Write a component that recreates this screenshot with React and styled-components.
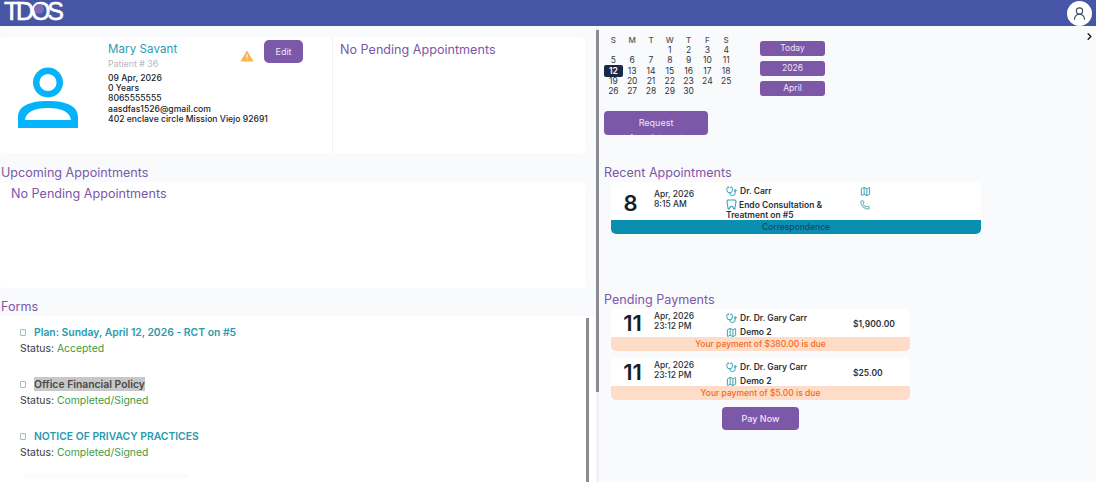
import React from 'react';
import styled, { createGlobalStyle } from 'styled-components';
import { ChevronRight, UserRound, Stethoscope, Map as MapIcon, Phone } from 'lucide-react';

const GlobalStyle = createGlobalStyle`
  html, body {
    margin: 0;
    padding: 0;
    height: 482px;
    overflow: hidden;
    background: #f9fafc;
    font-family: 'Inter', 'Liberation Sans', sans-serif;
  }
  * { box-sizing: border-box; }
`;

const purple = '#7d57a8';
const teal = '#2a9bb0';

const Page = styled.div`
  width: 1096px;
  height: 482px;
  display: flex;
  flex-direction: column;
  overflow: hidden;
`;
const Header = styled.header`
  height: 26px;
  flex: none;
  background: #4655a5;
  display: flex;
  align-items: center;
  justify-content: space-between;
  padding: 0 4px;
`;
const Logo = styled.div`
  position: relative;
  color: #fff;
  font-size: 25px;
  line-height: 22px;
  padding-bottom: 4px;
  letter-spacing: -3.2px;
  -webkit-text-stroke: 0.6px #fff;
  font-family: 'Liberation Sans', sans-serif;
`;
const LogoDot = styled.span`
  position: absolute;
  left: 30px;
  top: 4px;
  width: 10px;
  height: 10px;
  border-radius: 50%;
  background: #7f6ab4;
`;
const UserButton = styled.div`
  width: 25px;
  height: 25px;
  border-radius: 50%;
  background: #fff;
  color: #3a4a5a;
  display: flex;
  align-items: center;
  justify-content: center;
`;
const Body = styled.main`
  flex: 1;
  display: flex;
  min-height: 0;
`;
const LeftPane = styled.section`
  width: 596px;
  flex: none;
  padding-top: 11px;
  display: flex;
  flex-direction: column;
`;
const RightPane = styled.section`
  position: relative;
  flex: 1;
  border-left: 3px solid #f0f1f5;
  padding: 9px 0 0 5px;
`;
const Thumb = styled.div`
  position: absolute;
  left: -3px;
  top: 4px;
  width: 3px;
  height: 362px;
  background: #8b8b8f;
`;
const Collapse = styled.div`
  position: absolute;
  top: 0;
  right: 1px;
  color: #1a1a1a;
`;
const Panel = styled.div`
  width: 585px;
  background: #fff;
  border-radius: 4px;
`;
const PatientPanel = styled(Panel)`
  height: 116px;
  display: flex;
`;
const PatientInfo = styled.div`
  width: 333px;
  border-right: 1px solid #f1f2f5;
  display: flex;
  position: relative;
`;
const AvatarSlot = styled.div`
  width: 108px;
  flex: none;
  padding: 30px 0 0 18px;
`;
const Details = styled.div`
  padding-top: 5px;
`;
const PatientName = styled.div`
  color: ${teal};
  font-size: 11.5px;
  line-height: 14px;
  letter-spacing: 0.1px;
`;
const PatientNumber = styled.div`
  color: #b5b8c2;
  font-size: 8.8px;
  line-height: 10px;
  margin: 3px 0 4px;
`;
const DetailLine = styled.div`
  color: #20242c;
  font-size: 8.6px;
  font-weight: 500;
  line-height: 10.2px;
  white-space: nowrap;
`;
const Warning = styled.div`
  position: absolute;
  left: 240px;
  top: 9px;
`;
const EditButton = styled.div`
  position: absolute;
  left: 264px;
  top: 3px;
  width: 39px;
  height: 23px;
  border-radius: 5px;
  background: ${purple};
  color: #eee6f5;
  font-size: 9px;
  display: flex;
  align-items: center;
  justify-content: center;
`;
const NoPending = styled.div`
  color: ${purple};
  font-size: 12.6px;
  font-weight: 400;
  line-height: 16px;
  padding: ${(p) => p.$padding};
`;
const SectionTitle = styled.h2`
  margin: 0;
  color: ${purple};
  font-size: 12.6px;
  font-weight: 400;
  line-height: 16px;
`;
const LeftTitle = styled(SectionTitle)`
  padding: ${(p) => p.$padding};
`;
const UpcomingPanel = styled(Panel)`
  height: 106px;
`;
const FormsPanel = styled.div`
  position: relative;
  flex: 1;
  min-height: 0;
  overflow: hidden;
  background: #fff;
  padding: 9px 0 0 20px;
`;
const FormsThumb = styled.div`
  position: absolute;
  left: 586px;
  top: 2px;
  bottom: 0;
  width: 3px;
  background: #8b8b8f;
`;
const FormItem = styled.div`
  height: 52px;
`;
const FormTitleRow = styled.div`
  display: flex;
  align-items: center;
  height: 14px;
  gap: 8px;
`;
const FormCheck = styled.span`
  width: 6px;
  height: 7px;
  flex: none;
  border: 1px solid #9cc7a4;
  border-radius: 1px;
`;
const FormLink = styled.span`
  font-size: 10.36px;
  font-weight: 600;
  color: ${(p) => (p.$selected ? '#4a4a4a' : teal)};
  background: ${(p) => (p.$selected ? '#c8c8c8' : 'transparent')};
  line-height: 14px;
`;
const StatusLine = styled.div`
  font-size: 10.4px;
  line-height: 14px;
  margin-top: 3px;
  color: #33373d;
`;
const StatusValue = styled.span`
  color: #3f9a3f;
`;
const FadedRow = styled.div`
  width: 164px;
  height: 4px;
  margin: -7px 0 0 5px;
  background: #f8fcfd;
  filter: blur(1px);
`;

const CalendarRow = styled.div`
  display: flex;
  height: 71px;
`;
const CalendarGrid = styled.div`
  width: 132px;
  display: grid;
  grid-template-columns: repeat(7, 18.8px);
  grid-auto-rows: 10.2px;
`;
const Cell = styled.div`
  font-size: ${(p) => (p.$head ? '8px' : '8.5px')};
  line-height: ${(p) => (p.$selected ? '12.2px' : '10.2px')};
  margin: ${(p) => (p.$selected ? '-1px 0' : '0')};
  text-align: center;
  color: ${(p) => (p.$selected ? '#fff' : p.$head ? '#555' : '#33363c')};
  background: ${(p) => (p.$selected ? '#182848' : 'transparent')};
  border-radius: 2px;
  font-weight: ${(p) => (p.$selected ? 600 : p.$head ? 500 : 400)};
`;
const CalendarButtons = styled.div`
  margin: 6px 0 0 24px;
  display: flex;
  flex-direction: column;
  gap: 5px;
`;
const CalendarButton = styled.div`
  width: 65px;
  height: 15px;
  border-radius: 3px;
  background: ${purple};
  color: #eee6f5;
  font-size: 8.5px;
  line-height: 15px;
  text-align: center;
`;
const RequestButton = styled.div`
  width: 104px;
  height: 24px;
  margin-top: 5px;
  border-radius: 4px;
  background: ${purple};
  color: #eee6f5;
  font-size: 9px;
  line-height: 15px;
  text-align: center;
  padding-top: 4px;
  overflow: hidden;
`;
const RightTitle = styled(SectionTitle)`
  margin-top: ${(p) => p.$top};
  height: 16px;
`;
const Card = styled.div`
  margin: ${(p) => p.$margin};
  margin-left: 7px;
  width: ${(p) => p.$width}px;
  height: ${(p) => p.$height}px;
  background: #fff;
  border-radius: 5px;
  overflow: hidden;
  display: flex;
  flex-direction: column;
`;
const CardBody = styled.div`
  flex: 1;
  min-height: 0;
  display: flex;
`;
const DayNumber = styled.div`
  width: 43px;
  flex: none;
  text-align: center;
  color: #161d2e;
  font-size: 22px;
  font-weight: 600;
  line-height: 28px;
  padding: ${(p) => p.$top}px ${(p) => p.$inset || 0}px 0 0;
`;
const DateText = styled.div`
  width: 72px;
  flex: none;
  padding-top: ${(p) => p.$top}px;
  color: #2c3038;
  font-size: 8.5px;
  font-weight: 500;
  line-height: 10px;
`;
const InfoColumn = styled.div`
  width: ${(p) => p.$width}px;
  flex: none;
  padding-top: 4px;
`;
const InfoLine = styled.div`
  display: flex;
  gap: 3px;
  align-items: flex-start;
  min-height: 10px;
  margin-bottom: ${(p) => p.$gap || 0}px;
  color: #2c3038;
  font-size: 8.5px;
  font-weight: 600;
  line-height: 10px;
  svg { flex: none; color: ${teal}; }
`;
const WrapText = styled.div`
  width: 108px;
  svg { vertical-align: -2px; margin-right: 2px; }
`;
const Amount = styled.div`
  padding-top: 10px;
  color: #2c3038;
  font-size: 8.5px;
  font-weight: 600;
`;
const StatusBar = styled.div`
  height: 14px;
  flex: none;
  background: ${(p) => p.$bg};
  color: ${(p) => p.$color};
  font-size: 8.5px;
  line-height: 14px;
  font-weight: 500;
  text-align: center;
`;
const PayRow = styled.div`
  width: 299px;
  margin: 7px 0 0 7px;
  display: flex;
  justify-content: center;
`;
const PayButton = styled.div`
  width: 77px;
  height: 23px;
  border-radius: 4px;
  background: ${purple};
  color: #eee6f5;
  font-size: 9px;
  font-weight: 500;
  line-height: 23px;
  text-align: center;
`;

const AvatarIcon = () => (
  <svg width="60" height="62" viewBox="0 0 60 62" fill="none">
    <circle cx="30" cy="15.5" r="11.8" stroke="#05b3fb" strokeWidth="6.4" />
    <path
      d="M0 61V50C0 40 10 34 30 34C50 34 60 40 60 50V61H0ZM7 53H53C52 45 44 41 30 41C16 41 8 45 7 53Z"
      fill="#05b3fb"
      fillRule="evenodd"
    />
  </svg>
);

const WarningIcon = () => (
  <svg width="14" height="12" viewBox="0 0 14 12">
    <path d="M7 0.5L13.6 11.5H0.4Z" fill="#f9b350" />
    <rect x="6.5" y="4" width="1" height="4" fill="#fff" />
    <rect x="6.5" y="9" width="1" height="1" fill="#fff" />
  </svg>
);

const ToothIcon = () => (
  <svg width="11" height="11" viewBox="0 0 12 12" fill="none" stroke="currentColor" strokeWidth="1.1" strokeLinejoin="round">
    <path d="M2.5 1.2H9.5C10.4 1.2 10.9 1.8 10.9 2.7C10.9 5 10 6 9.7 10.8H8.8L6.8 8H5.2L3.2 10.8H2.3C2 6 1.1 5 1.1 2.7C1.1 1.8 1.6 1.2 2.5 1.2Z" />
  </svg>
);

const heads = ['S', 'M', 'T', 'W', 'T', 'F', 'S'];
const days = [null, null, null, ...Array.from({ length: 30 }, (_, i) => i + 1)];

const forms = [
  { title: 'Plan: Sunday, April 12, 2026 - RCT on #5', status: 'Accepted' },
  { title: 'Office Financial Policy', status: 'Completed/Signed', selected: true },
  { title: 'NOTICE OF PRIVACY PRACTICES', status: 'Completed/Signed' },
];

const payments = [
  { amount: '$1,900.00', due: 'Your payment of $380.00 is due', margin: '1px 0 0' },
  { amount: '$25.00', due: 'Your payment of $5.00 is due', margin: '7px 0 0' },
];

const App = () => (
  <Page>
    <GlobalStyle />
    <Header>
      <Logo>
        TDOS
        <LogoDot />
      </Logo>
      <UserButton>
        <UserRound size={15} strokeWidth={1.8} />
      </UserButton>
    </Header>
    <Body>
      <LeftPane>
        <PatientPanel>
          <PatientInfo>
            <AvatarSlot>
              <AvatarIcon />
            </AvatarSlot>
            <Details>
              <PatientName>Mary Savant</PatientName>
              <PatientNumber>Patient # 36</PatientNumber>
              <DetailLine>09 Apr, 2026</DetailLine>
              <DetailLine>0 Years</DetailLine>
              <DetailLine>8065555555</DetailLine>
              <DetailLine>aasdfas1526@gmail.com</DetailLine>
              <DetailLine>402 enclave circle Mission Viejo 92691</DetailLine>
            </Details>
            <Warning>
              <WarningIcon />
            </Warning>
            <EditButton>Edit</EditButton>
          </PatientInfo>
          <NoPending $padding="5px 0 0 7px">No Pending Appointments</NoPending>
        </PatientPanel>
        <LeftTitle $padding="12px 0 1px 1px">Upcoming Appointments</LeftTitle>
        <UpcomingPanel>
          <NoPending $padding="4px 0 0 11px">No Pending Appointments</NoPending>
        </UpcomingPanel>
        <LeftTitle $padding="11px 0 1px 1px">Forms</LeftTitle>
        <FormsPanel>
          {forms.map((form) => (
            <FormItem key={form.title}>
              <FormTitleRow>
                <FormCheck />
                <FormLink $selected={form.selected}>{form.title}</FormLink>
              </FormTitleRow>
              <StatusLine>
                Status: <StatusValue>{form.status}</StatusValue>
              </StatusLine>
            </FormItem>
          ))}
          <FadedRow />
          <FormsThumb />
        </FormsPanel>
      </LeftPane>
      <RightPane>
        <Thumb />
        <Collapse>
          <ChevronRight size={11} strokeWidth={3} />
        </Collapse>
        <CalendarRow>
          <CalendarGrid>
            {heads.map((head, i) => (
              <Cell key={i} $head>
                {head}
              </Cell>
            ))}
            {days.map((day, i) => (
              <Cell key={i} $selected={day === 12}>
                {day}
              </Cell>
            ))}
          </CalendarGrid>
          <CalendarButtons>
            <CalendarButton>Today</CalendarButton>
            <CalendarButton>2026</CalendarButton>
            <CalendarButton>April</CalendarButton>
          </CalendarButtons>
        </CalendarRow>
        <RequestButton>
          Request
          <br />
          Appointment
        </RequestButton>
        <RightTitle $top="30px">Recent Appointments</RightTitle>
        <Card $margin="1px 0 0" $width={370} $height={52}>
          <CardBody>
            <DayNumber $top={7} $inset={4}>8</DayNumber>
            <DateText $top={7}>
              Apr, 2026
              <br />
              8:15 AM
            </DateText>
            <InfoColumn $width={134}>
              <InfoLine $gap={2}>
                <Stethoscope size={11} />
                Dr. Carr
              </InfoLine>
              <InfoLine>
                <WrapText>
                  <ToothIcon />
                  Endo Consultation &amp; Treatment on #5
                </WrapText>
              </InfoLine>
            </InfoColumn>
            <InfoColumn $width={20}>
              <InfoLine $gap={3}>
                <MapIcon size={11} />
              </InfoLine>
              <InfoLine>
                <Phone size={10} />
              </InfoLine>
            </InfoColumn>
          </CardBody>
          <StatusBar $bg="#0b8fb0" $color="#17466a">
            Correspondence
          </StatusBar>
        </Card>
        <RightTitle $top="58px">Pending Payments</RightTitle>
        {payments.map((payment) => (
          <Card key={payment.amount} $margin={payment.margin} $width={299} $height={42}>
            <CardBody>
              <DayNumber $top={0}>11</DayNumber>
              <DateText $top={2}>
                Apr, 2026
                <br />
                23:12 PM
              </DateText>
              <InfoColumn $width={127}>
                <InfoLine $gap={3}>
                  <Stethoscope size={11} />
                  Dr. Dr. Gary Carr
                </InfoLine>
                <InfoLine>
                  <MapIcon size={11} />
                  Demo 2
                </InfoLine>
              </InfoColumn>
              <Amount>{payment.amount}</Amount>
            </CardBody>
            <StatusBar $bg="#ffdcc8" $color="#f26a1b">
              {payment.due}
            </StatusBar>
          </Card>
        ))}
        <PayRow>
          <PayButton>Pay Now</PayButton>
        </PayRow>
      </RightPane>
    </Body>
  </Page>
);

export default App;
